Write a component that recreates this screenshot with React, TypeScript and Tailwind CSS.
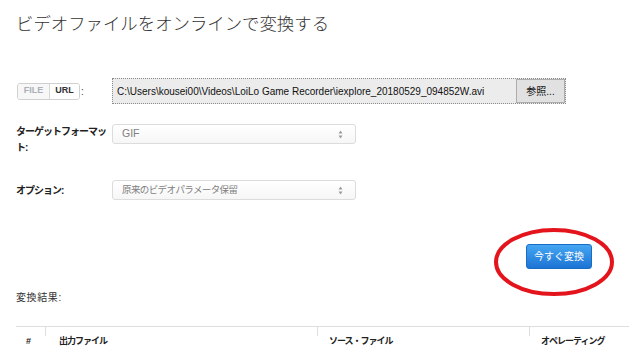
import React from "react";

const jp = "font-['Liberation_Sans','Noto_Sans_CJK_JP',sans-serif]";

function SelectBox({ value, latin }: { value: string; latin?: boolean }) {
  return (
    <div className="flex h-[20px] w-[244px] items-center justify-between rounded-[3px] border border-[#dcdcdc] bg-gradient-to-b from-white to-[#f6f6f6] pl-[9px] pr-[12px]">
      <span className={latin ? "text-[10.5px] text-[#808080]" : "text-[9.5px] tracking-[-0.6px] text-[#808080]"}>
        {value}
      </span>
      <svg width="5" height="9" viewBox="0 0 5 9">
        <path d="M2.5 0.5 L4.5 3.5 L0.5 3.5 Z" fill="#9a9a9a" />
        <path d="M2.5 8.5 L4.5 5.5 L0.5 5.5 Z" fill="#9a9a9a" />
      </svg>
    </div>
  );
}

export default function App() {
  return (
    <div className={`h-[357px] w-[644px] overflow-hidden bg-white px-4 text-[#222] ${jp}`}>
      {/* Title */}
      <h1 className="pt-[12px] text-[17.4px] font-light leading-[24px] text-[#333]">
        ビデオファイルをオンラインで変換する
      </h1>

      {/* File row */}
      <div className="mt-[42px] flex items-center">
        <div className="flex w-[96px] items-center">
          <div className="ml-[1px] flex h-[17px] overflow-hidden rounded-[3px] border border-[#d0d0d0] text-[9px] font-bold">
            <span className="flex w-[31px] items-center justify-center bg-[#f7f7f7] text-[#aab0b6]">FILE</span>
            <span className="flex w-[30px] items-center justify-center border-l border-[#d8d8d8] bg-white text-[#333]">URL</span>
          </div>
          <span className="ml-[1px] text-[10px] text-[#444]">:</span>
        </div>
        <div className="flex h-[26px] w-[454px] items-center border border-dotted border-[#8c8c8c] bg-[#ececec]">
          <span className="flex-1 pl-[4px] text-[10px] text-[#111]">
            C:\Users\kousei00\Videos\LoiLo Game Recorder\iexplore_20180529_094852W.avi
          </span>
          <span className="flex h-[24px] w-[49px] items-center justify-center border border-[#adadad] bg-[#e1e1e1] text-[10px] text-[#111]">
            参照...
          </span>
        </div>
      </div>

      {/* Target format */}
      <div className="mt-[20px] flex items-start">
        <div className="w-[96px] text-[10px] font-bold leading-[16px] tracking-[-1px] text-[#222]">
          ターゲットフォーマット:
        </div>
        <SelectBox value="GIF" latin />
      </div>

      {/* Options */}
      <div className="mt-[24px] flex items-center">
        <div className="w-[96px] text-[10px] font-bold tracking-[-1px] text-[#222]">オプション:</div>
        <SelectBox value="原来のビデオパラメータ保留" />
      </div>

      {/* Convert button */}
      <div className="mt-[44px] flex justify-end pr-[36px]">
        <div className="relative">
          <button className="flex h-[25px] w-[66px] items-center justify-center rounded-[3px] border border-[#1a6dc4] bg-gradient-to-b from-[#45a6f2] to-[#1c74d4] text-[10px] text-white">
            今すぐ変換
          </button>
          <svg
            className="pointer-events-none absolute left-[-33px] top-[-17px]"
            width="122"
            height="70"
            viewBox="0 0 122 70"
          >
            <ellipse cx="61" cy="35" rx="58" ry="32" fill="none" stroke="#e3141c" strokeWidth="4" />
          </svg>
        </div>
      </div>

      {/* Results */}
      <div className="mt-[21px] text-[10px] leading-[16px] tracking-[0.6px] text-[#333]">変換結果:</div>

      <div className="mt-[20px] flex w-[613px] border-t border-[#dedede] text-[9px] font-bold tracking-[-1px] text-[#222]">
        <div className="h-[26px] w-[29px] pl-[10px] pt-[8px]">#</div>
        <div className="relative h-[26px] w-[272px] pl-[14px] pt-[8px]">
          <div className="absolute left-0 top-0 h-[9px] w-px bg-[#dedede]" />
          出力ファイル
        </div>
        <div className="relative h-[26px] w-[212px] pl-[12px] pt-[8px]">
          <div className="absolute left-0 top-0 h-[9px] w-px bg-[#dedede]" />
          ソース・ファイル
        </div>
        <div className="relative h-[26px] w-[100px] pl-[12px] pt-[8px]">
          <div className="absolute left-0 top-0 h-[9px] w-px bg-[#dedede]" />
          オペレーティング
        </div>
      </div>
    </div>
  );
}
